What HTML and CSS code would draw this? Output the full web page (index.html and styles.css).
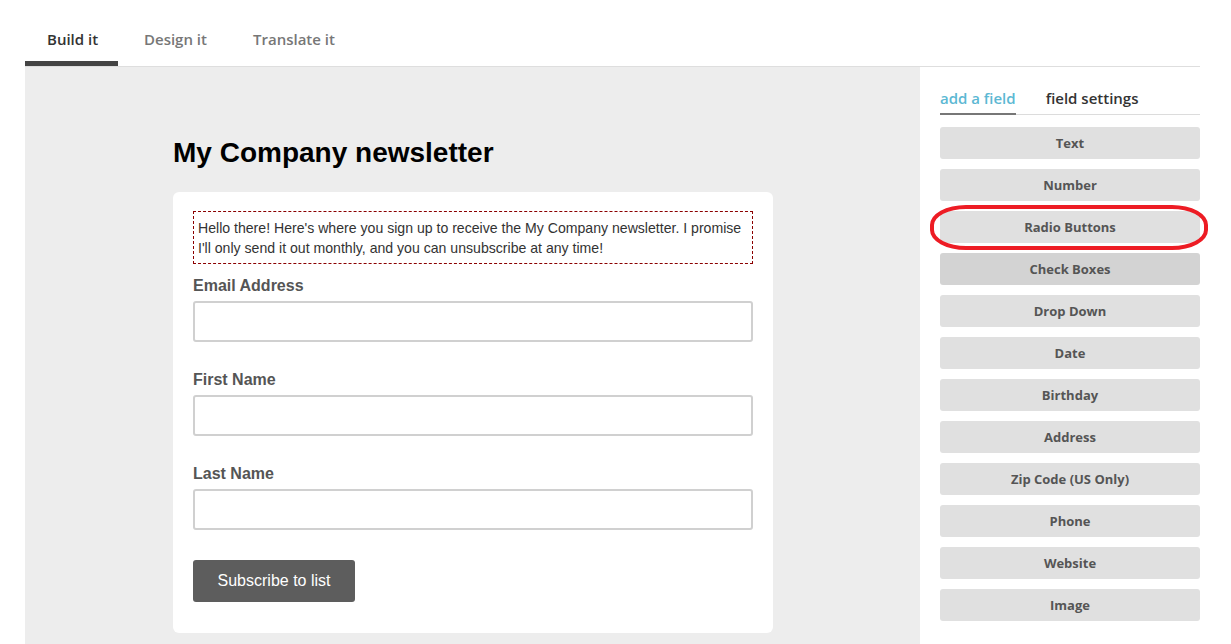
FILE: index.html
```html
<!DOCTYPE html>
<html>
<head>
<meta charset="utf-8">
<link rel="stylesheet" href="styles.css">
</head>
<body>
<div class="page">
  <nav class="tabs">
    <a class="tab active">Build it</a>
    <a class="tab">Design it</a>
    <a class="tab">Translate it</a>
  </nav>
  <div class="content">
    <main class="canvas">
      <h1 class="title">My Company newsletter</h1>
      <div class="card">
        <div class="intro">Hello there! Here's where you sign up to receive the My Company newsletter. I promise I'll only send it out monthly, and you can unsubscribe at any time!</div>
        <div class="field">
          <label class="label">Email Address</label>
          <div class="input"></div>
        </div>
        <div class="field">
          <label class="label">First Name</label>
          <div class="input"></div>
        </div>
        <div class="field">
          <label class="label">Last Name</label>
          <div class="input"></div>
        </div>
        <button class="submit">Subscribe to list</button>
      </div>
    </main>
    <aside class="sidebar">
      <div class="side-tabs">
        <span class="side-tab active">add a field</span>
        <span class="side-tab">field settings</span>
      </div>
      <div class="field-list">
        <div class="fbtn">Text</div>
        <div class="fbtn">Number</div>
        <div class="fbtn highlighted">Radio Buttons<span class="circle"></span></div>
        <div class="fbtn hover">Check Boxes</div>
        <div class="fbtn">Drop Down</div>
        <div class="fbtn">Date</div>
        <div class="fbtn">Birthday</div>
        <div class="fbtn">Address</div>
        <div class="fbtn">Zip Code (US Only)</div>
        <div class="fbtn">Phone</div>
        <div class="fbtn">Website</div>
        <div class="fbtn">Image</div>
      </div>
    </aside>
  </div>
</div>
</body>
</html>
```

FILE: styles.css
```css
* { box-sizing: border-box; }
html, body { margin: 0; padding: 0; background: #fff; overflow: hidden; }
body { width: 1231px; height: 644px; font-family: "Open Sans", sans-serif; }

.page { margin: 0 31px 0 25px; }

.tabs {
  display: flex;
  height: 67px;
  padding-top: 22px;
  border-bottom: 1px solid #dedede;
}
.tab {
  display: block;
  height: 44px;
  padding: 7px 0 0;
  font-size: 15px;
  font-weight: 600;
  color: #777;
}
.tab:nth-child(1) { width: 93px; padding-left: 22px; }
.tab:nth-child(2) { margin-left: 26px; width: 109px; }
.tab.active { color: #333; border-bottom: 5px solid #444; }

.content { display: flex; height: 577px; }

.canvas {
  width: 895px;
  background: #ededed;
  padding: 69px 0 0 148px;
}
.title {
  margin: 0 0 22px;
  font-family: "Liberation Sans", Arial, sans-serif;
  font-size: 28px;
  font-weight: bold;
  line-height: 34px;
  color: #000;
}
.card {
  width: 600px;
  background: #fff;
  border-radius: 6px;
  padding: 19px 20px 31px;
  font-family: "Liberation Sans", Arial, sans-serif;
}
.intro {
  border: 1px dashed #8b0000;
  padding: 6px 4px 5px;
  font-size: 14.1px;
  line-height: 20px;
  color: #333;
  margin-bottom: 12px;
}
.field { margin-bottom: 28px; }
.field:nth-of-type(4) { margin-bottom: 30px; }
.label {
  display: block;
  font-size: 16px;
  font-weight: bold;
  line-height: 20px;
  color: #555;
  margin-bottom: 5px;
}
.input {
  height: 41px;
  border: 2px solid #d0d0d0;
  border-radius: 3px;
  background: #fff;
}
.submit {
  display: block;
  width: 162px;
  height: 42px;
  border: 0;
  border-radius: 3px;
  background: #5d5d5d;
  color: #fff;
  font-family: "Liberation Sans", Arial, sans-serif;
  font-size: 16px;
  padding: 0;
}

.sidebar {
  width: 280px;
  background: #fff;
  padding: 19px 0 0 20px;
}
.side-tabs {
  display: flex;
  gap: 30px;
  border-bottom: 1px solid #dcdcdc;
  height: 29px;
}
.side-tab {
  font-size: 15px;
  font-weight: 600;
  color: #333;
  line-height: 22px;
  padding-top: 1px;
}
.side-tab.active {
  color: #5cb8d3;
  border-bottom: 2px solid #777;
  height: 29px;
}
.field-list {
  display: flex;
  flex-direction: column;
  gap: 10px;
  padding-top: 12px;
}
.fbtn {
  position: relative;
  height: 32px;
  background: #e0e0e0;
  border-radius: 3px;
  font-size: 13px;
  font-weight: 700;
  color: #555;
  text-align: center;
  line-height: 32px;
}
.fbtn.hover { background: #d3d3d3; }
.circle {
  position: absolute;
  left: -10px;
  top: -6px;
  width: 278px;
  height: 45px;
  border: 4px solid #ed1c24;
  border-radius: 36px / 20px;
  pointer-events: none;
}
```
